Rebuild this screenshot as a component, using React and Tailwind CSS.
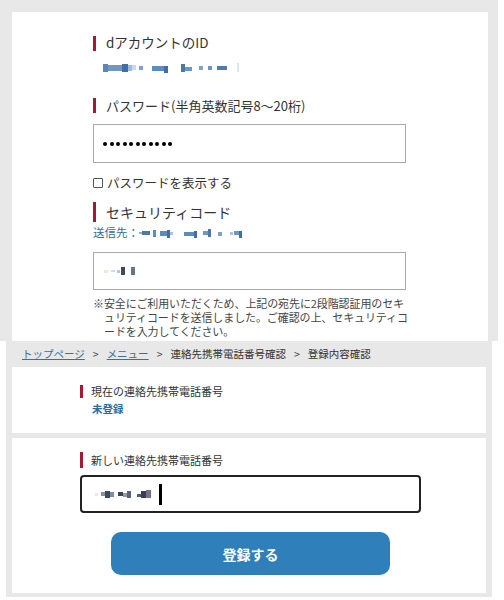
import React from "react";

function Blur({ parts, className = "" }) {
  return (
    <div className={"flex items-center " + className}>
      {parts.map((p, i) => (
        <span
          key={i}
          className="inline-block shrink-0"
          style={{ width: p[0], height: p[1], background: p[2], marginLeft: p[3] || 0, marginTop: p[4] || 0 }}
        />
      ))}
    </div>
  );
}

function Label({ children, size = "text-[13px]", bar = "h-[15px]", gap = "gap-[10px]" }) {
  return (
    <div className={"flex items-center h-[20px] " + gap}>
      <span className={"w-[3px] bg-[#a31a35] shrink-0 " + bar} />
      <span className={size + " text-[#333] leading-none whitespace-nowrap"}>{children}</span>
    </div>
  );
}

export default function App() {
  return (
    <div className="w-[504px] h-[600px] bg-white overflow-hidden font-['Noto_Sans_CJK_JP','Noto_Sans',sans-serif]">
      {/* top screenshot */}
      <div className="w-[498px] h-[341px] bg-[#e8e8e8] pt-[12px] pl-[12px] overflow-hidden">
        <div className="w-[476px] h-[329px] bg-white pt-[21px] pl-[81px]">
          <Label size="text-[13.5px]">dアカウントのID</Label>
          <Blur
            className="mt-[10px] h-[9px] ml-[10px]"
            parts={[
              [5, 8, "#5b86b8"],
              [14, 6, "#6f97c4", 0],
              [6, 8, "#3f6fa6"],
              [4, 6, "#9fbbdc", 0],
              [4, 5, "#c8d9ec"],
              [4, 4, "#7fa2cc", 3],
              [12, 5, "#5f8cc0", 9, 2],
              [4, 7, "#3f6fa6", 0, 3],
              [4, 8, "#4a78ae", 13],
              [7, 4, "#6d96c4", 0, 2],
              [4, 4, "#7fa2cc", 7],
              [4, 4, "#6d96c4", 5],
              [10, 4, "#4e7cb2", 5],
              [2, 9, "#d8e8f4", 10],
            ]}
          />
          <div className="mt-[23px]">
            <Label>パスワード(半角英数記号8〜20桁)</Label>
          </div>
          <div className="mt-[9px] w-[313px] h-[39px] border border-[#a9a9a9] flex items-center pl-[9px] gap-[2.5px]">
            {Array.from({ length: 11 }).map((_, i) => (
              <span key={i} className="w-[4px] h-[4px] rounded-full bg-black" />
            ))}
          </div>
          <div className="mt-[11px] h-[18px] flex items-center gap-[4px]">
            <span className="w-[10px] h-[10px] border border-[#555] rounded-[1px] bg-white" />
            <span className="text-[12.5px] text-[#333] leading-none">パスワードを表示する</span>
          </div>
          <div className="mt-[10px]">
            <Label bar="h-[20px]" size="text-[14px]">セキュリティコード</Label>
          </div>
          <div className="mt-[3px] h-[16px] flex items-center">
            <span className="text-[11.5px] text-[#2b6ca3] leading-none">送信先：</span>
            <Blur
              className="h-[8px]"
              parts={[
                [3, 2, "#8fb0d6", 0],
                [8, 4, "#4b78ae", 0],
                [3, 7, "#5f8ac0", 3],
                [7, 5, "#5f8ac0", 4],
                [3, 8, "#3f6fa6", 0, 2],
                [3, 3, "#aac4e2"],
                [10, 4, "#5f8ac0", 11, 1],
                [3, 7, "#3f6fa6", 0, 3],
                [5, 4, "#6d96c4", 6],
                [3, 8, "#4a78ae", 0],
                [4, 4, "#7fa2cc", 7, 2],
                [3, 3, "#aac4e2", 8],
                [5, 4, "#6d96c4", 1],
                [3, 7, "#3f6fa6", 0, 3],
              ]}
            />
          </div>
          <div className="mt-[11px] w-[313px] h-[38px] border border-[#a9a9a9] flex items-center pl-[10px]">
            <Blur
              className="h-[8px]"
              parts={[
                [4, 3, "#f3ead0"],
                [4, 2, "#d8d8e0", 3],
                [3, 3, "#b8c4d4", 2],
                [4, 8, "#404860", 1],
                [4, 8, "#6a7488", 6],
              ]}
            />
          </div>
          <div className="mt-[6px] text-[11px] leading-[14px] text-[#444] whitespace-nowrap tracking-[-0.1px]">
            <div>※安全にご利用いただくため、上記の宛先に2段階認証用のセキ</div>
            <div className="pl-[11px]">ュリティコードを送信しました。ご確認の上、セキュリティコ</div>
            <div className="pl-[11px]">ードを入力してください。</div>
          </div>
        </div>
      </div>

      {/* bottom screenshot */}
      <div className="ml-[6px] w-[486px] h-[256px] bg-[#e8e8e8] px-[6px]">
        <div className="h-[26px] flex items-center pl-[10px] gap-[8px] text-[10.5px] text-[#333] leading-none whitespace-nowrap">
          <span className="text-[#3d6f9c] underline">トップページ</span>
          <span>&gt;</span>
          <span className="text-[#3d6f9c] underline">メニュー</span>
          <span>&gt;</span>
          <span>連絡先携帯電話番号確認</span>
          <span>&gt;</span>
          <span>登録内容確認</span>
        </div>
        <div className="w-[474px] h-[66px] bg-white pt-[14px] pl-[68px]">
          <Label size="text-[11px]" bar="h-[13px]" gap="gap-[8px]">現在の連絡先携帯電話番号</Label>
          <div className="mt-[3px] pl-[12px] text-[10.5px] text-[#2b6ca3] font-bold leading-none">未登録</div>
        </div>
        <div className="mt-[5px] w-[474px] h-[155px] bg-white pt-[12px] pl-[68px]">
          <Label size="text-[11px]" bar="h-[16px]" gap="gap-[8px]">新しい連絡先携帯電話番号</Label>
          <div className="mt-[5px] w-[341px] h-[38px] border-2 border-[#222] rounded-[4px] flex items-center pl-[13px]">
            <Blur
              className="h-[8px]"
              parts={[
                [3, 3, "#e8e8ec"],
                [4, 4, "#8890a0", 3],
                [5, 7, "#3c4a5c", 0],
                [4, 5, "#7f8fa0", 0],
                [5, 4, "#3a4254", 4, -1],
                [4, 4, "#8e98a8", 0, 2],
                [4, 7, "#5a6478", 0],
                [4, 3, "#505a6c", 6, 2],
                [5, 7, "#3a3f58", 0],
                [5, 8, "#787088", 0],
              ]}
            />
            <span className="ml-[8px] w-[3px] h-[21px] bg-black" />
          </div>
          <div className="mt-[19px] ml-[31px] w-[279px] h-[43px] rounded-[10px] bg-[#2e7fba] flex items-center justify-center text-white text-[14px] font-bold leading-none">
            登録する
          </div>
        </div>
      </div>
    </div>
  );
}
